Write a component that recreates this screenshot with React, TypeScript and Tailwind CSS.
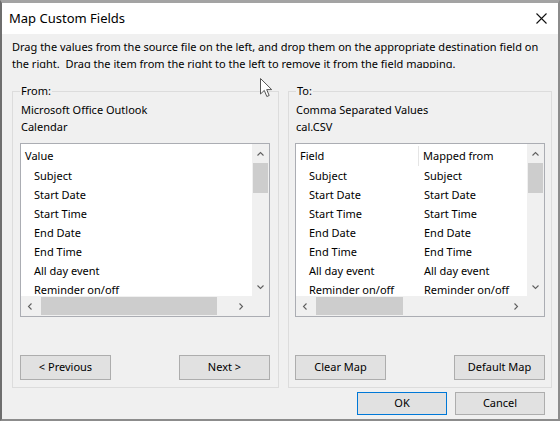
import React from "react"

const fields = ["Subject", "Start Date", "Start Time", "End Date", "End Time", "All day event", "Reminder on/off"]

function Chevron({ dir }: { dir: "up" | "down" | "left" | "right" }) {
  const pts = {
    up: "0.5,4.5 3.5,1.5 6.5,4.5",
    down: "0.5,1.5 3.5,4.5 6.5,1.5",
    left: "4.5,0.5 1.5,3.5 4.5,6.5",
    right: "1.5,0.5 4.5,3.5 1.5,6.5",
  }[dir]
  const vert = dir === "up" || dir === "down"
  return (
    <svg width={vert ? 7 : 6} height={vert ? 6 : 7} viewBox={vert ? "0 0 7 6" : "0 0 6 7"}>
      <polyline points={pts} fill="none" stroke="#606060" strokeWidth="1.1" />
    </svg>
  )
}

function ListBox({ children, thumb }: { children: React.ReactNode; thumb: string }) {
  return (
    <div className="mt-[8px] flex h-[174px] flex-col border border-[#abadb3] bg-white">
      <div className="flex h-[152px]">
        <div className="flex-1 overflow-hidden pt-[2px]">{children}</div>
        <div className="flex w-[17px] flex-col bg-[#f0f0f0]">
          <div className="flex h-[19px] items-center justify-center">
            <Chevron dir="up" />
          </div>
          <div className="mx-px h-[30px] bg-[#cdcdcd]" />
          <div className="flex-1" />
          <div className="flex h-[19px] items-center justify-center">
            <Chevron dir="down" />
          </div>
        </div>
      </div>
      <div className="flex h-[20px] bg-[#f0f0f0]">
        <div className="flex w-[17px] items-center justify-center">
          <Chevron dir="left" />
        </div>
        <div className="flex flex-1 py-px pl-[3px]">
          <div className={thumb + " bg-[#cdcdcd]"} />
        </div>
        <div className="mr-[3px] flex w-[17px] items-center justify-center">
          <Chevron dir="right" />
        </div>
        <div className="w-[17px]" />
      </div>
    </div>
  )
}

function Btn({ label, primary }: { label: string; primary?: boolean }) {
  return (
    <button
      className={
        primary
          ? "h-[23px] w-[90px] border border-[#0078d7] bg-[#e1e1e1] text-[11px] text-black"
          : "h-[23px] w-[90px] border border-[#adadad] bg-[#e1e1e1] text-[11px] text-black"
      }
    >
      {label}
    </button>
  )
}

function GroupBtn({ label }: { label: string }) {
  return (
    <button className="h-[25px] w-[91px] border border-[#adadad] bg-[#e1e1e1] text-[11px] text-black">
      {label}
    </button>
  )
}

export default function App() {
  return (
    <div className="relative h-[421px] w-[560px] overflow-hidden border-t-[3px] border-r-2 border-b-2 border-l-2 border-t-[#a3a3a3] border-r-[#8c8c8c] border-b-[#8c8c8c] border-l-[#6e6e6e] bg-[#f0f0f0] font-['Noto_Sans',sans-serif] text-black">
      {/* title bar */}
      <div className="flex h-[31px] items-center justify-between bg-white pl-[7px] pr-[11px]">
        <span className="text-[13px]">Map Custom Fields</span>
        <svg width="11" height="11" viewBox="0 0 11 11">
          <path d="M0.5 0.5 L10.5 10.5 M10.5 0.5 L0.5 10.5" stroke="#111" strokeWidth="1.1" />
        </svg>
      </div>

      {/* description, clipped like the original label */}
      <div className="mt-[4px] h-[30px] overflow-hidden pl-[10px] text-[11px] leading-[17px]">
        <div className="whitespace-nowrap">
          Drag the values from the source file on the left, and drop them on the appropriate destination field on
        </div>
        <div className="whitespace-nowrap">
          the right.&nbsp; Drag the item from the right to the left to remove it from the field mapping.
        </div>
      </div>

      {/* groups */}
      <div className="mt-[16px] flex gap-[9px] pl-[10px] text-[11px]">
        <fieldset className="h-[304px] w-[267px] border border-[#dcdcdc] pl-[7px] pr-[8px]">
          <legend className="ml-0 px-px leading-[14px]">From:</legend>
          <div className="mt-[3px] pl-px leading-[17px]">Microsoft Office Outlook</div>
          <div className="pl-px leading-[17px]">Calendar</div>
          <ListBox thumb="w-[176px]">
            <div className="h-[20px] pl-[4px] leading-[20px]">Value</div>
            {fields.map((f) => (
              <div key={f} className="h-[19px] whitespace-nowrap pl-[13px] leading-[19px]">
                {f}
              </div>
            ))}
          </ListBox>
          <div className="mt-[38px] flex justify-between">
            <GroupBtn label="< Previous" />
            <GroupBtn label="Next >" />
          </div>
        </fieldset>

        <fieldset className="h-[304px] w-[264px] border border-[#dcdcdc] px-[6px]">
          <legend className="ml-px px-px leading-[14px]">To:</legend>
          <div className="mt-[3px] pl-px leading-[17px]">Comma Separated Values</div>
          <div className="pl-px leading-[17px]">cal.CSV</div>
          <ListBox thumb="w-[87px]">
            <div className="flex h-[20px] leading-[20px]">
              <div className="w-[123px] border-r border-[#e5e5e5] pl-[4px]">Field</div>
              <div className="whitespace-nowrap pl-[4px]">Mapped from</div>
            </div>
            {fields.map((f) => (
              <div key={f} className="flex h-[19px] whitespace-nowrap leading-[19px]">
                <div className="w-[123px] pl-[13px]">{f}</div>
                <div className="pl-[5px]">{f}</div>
              </div>
            ))}
          </ListBox>
          <div className="mt-[38px] flex justify-between">
            <GroupBtn label="Clear Map" />
            <GroupBtn label="Default Map" />
          </div>
        </fieldset>
      </div>

      {/* dialog buttons */}
      <div className="mt-[4px] flex justify-end gap-[8px] pr-[13px]">
        <Btn label="OK" primary />
        <Btn label="Cancel" />
      </div>

      {/* mouse pointer */}
      <svg className="absolute left-[258px] top-[75px]" width="13" height="20" viewBox="0 0 13 20">
        <path
          d="M0.5 0.5 L0.5 16 L4.3 12.4 L6.8 18.5 L9.2 17.5 L6.7 11.6 L11.7 11.6 Z"
          fill="#fff"
          stroke="#555"
          strokeWidth="1"
        />
      </svg>
    </div>
  )
}
